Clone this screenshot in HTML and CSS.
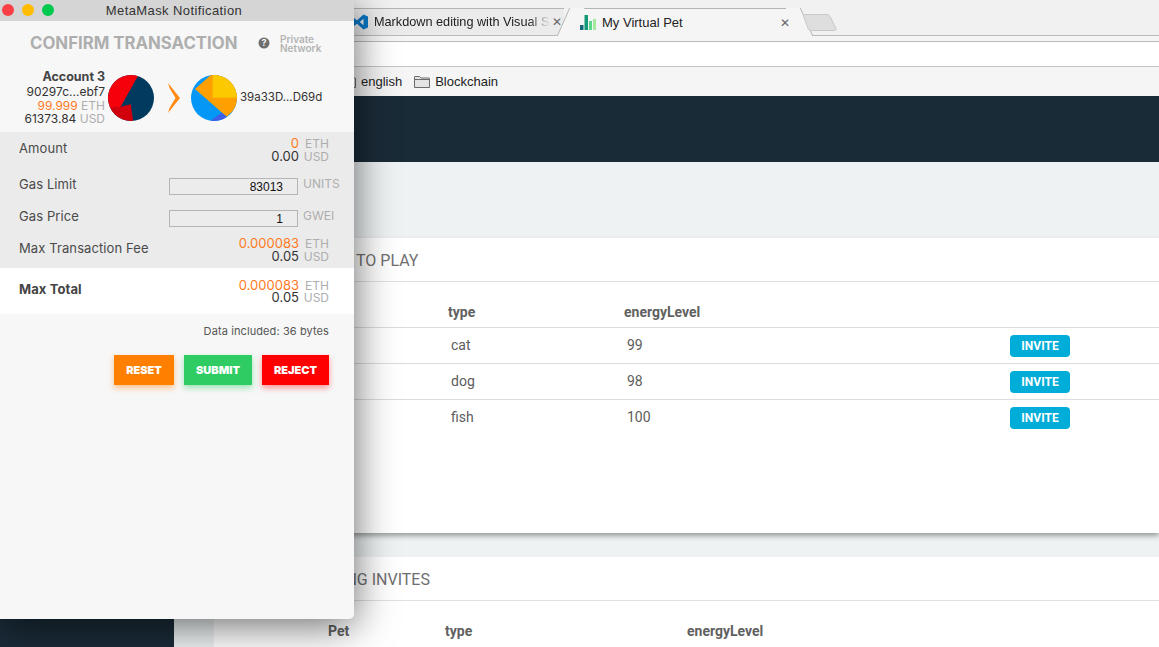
FILE: index.html
```html
<!DOCTYPE html>
<html lang="en">
    <head>
        <meta charset="UTF-8" />
        <title>My Virtual Pet</title>
        <link rel="stylesheet" href="styles.css">
    </head>
    <body>
        <div id="browser">
            <div class="tab-strip">
                <div class="tab tab-back">
                    <svg class="favicon" viewBox="0 0 16 16" width="16" height="16"><path fill="#0a78c8" d="M11.500 0.500 16 2.600v10.800l-4.500 2.100L5 9.800l-3 2.300-1.500-.8V4.700L2 3.900l3 2.300zM11.500 4.800 7.800 8l3.700 3.200z"/></svg>
                    <span class="tab-title tab-fade">Markdown editing with Visual S</span>
                    <span class="tab-close">&#10005;</span>
                </div>
                <div class="tab tab-active">
                    <svg class="favicon" viewBox="0 0 16 16" width="16" height="16">
                        <rect x="0" y="10" width="3.500" height="5" fill="#17687a"/>
                        <rect x="4.500" y="0" width="3.500" height="15" fill="#129a78"/>
                        <rect x="9" y="6" width="3" height="9" fill="#58d68a"/>
                        <rect x="13" y="4" width="3" height="11" fill="#a5e8a0"/>
                    </svg>
                    <span class="tab-title">My Virtual Pet</span>
                    <span class="tab-close">&#10005;</span>
                </div>
                <svg class="new-tab" viewBox="0 0 34 17" width="34" height="17"><path d="M1.500 .5H24q2 0 3 2l6 12q.6 2-1.500 2H8q-2 0-3-2L.6 2q-.4-1.500 .9-1.500z" fill="#dedede" stroke="#c8c8c8"/></svg>
            </div>
            <div class="toolbar-gap"></div>
            <div class="address-bar"></div>
            <div class="bookmarks">
                <div class="bookmark">
                    <svg class="folder" viewBox="0 0 16 12" width="16" height="12"><path d="M.5 11.500V1q0-.5 .5-.5h4.500l1.500 1.500h8q.5 0 .5 .5v9z" fill="#e4e4e4" stroke="#6b6b6b"/></svg>
                    <span>english</span>
                </div>
                <div class="bookmark">
                    <svg class="folder" viewBox="0 0 16 12" width="16" height="12"><path d="M.5 11.500V1q0-.5 .5-.5h4.500l1.500 1.500h8q.5 0 .5 .5v9z" fill="#e4e4e4" stroke="#6b6b6b"/><path d="M.5 3.500h15" stroke="#6b6b6b" fill="none"/></svg>
                    <span>Blockchain</span>
                </div>
            </div>
            <div class="app-header"></div>
            <div class="app-body">
                <div class="sidebar"></div>
                <div class="main">
                    <div class="page-title"></div>
                    <section class="card card-play">
                        <h2>TO PLAY</h2>
                        <div class="pet-table">
                            <div class="pet-row pet-head"><span></span><span>type</span><span>energyLevel</span><span></span></div>
                            <div class="pet-row"><span></span><span>cat</span><span>99</span><span><button class="invite">INVITE</button></span></div>
                            <div class="pet-row"><span></span><span>dog</span><span>98</span><span><button class="invite">INVITE</button></span></div>
                            <div class="pet-row"><span></span><span>fish</span><span>100</span><span><button class="invite">INVITE</button></span></div>
                        </div>
                    </section>
                    <section class="card card-invites">
                        <h2>PENDING INVITES</h2>
                        <div class="pet-table">
                            <div class="pet-row pet-head"><span>Pet</span><span>type</span><span>energyLevel</span></div>
                        </div>
                    </section>
                </div>
            </div>
        </div>

        <div id="popup">
            <div class="title-bar">
                <div class="lights">
                    <span class="light light-red"></span>
                    <span class="light light-yellow"></span>
                    <span class="light light-green"></span>
                </div>
                <div class="title-text">MetaMask Notification</div>
            </div>
            <div class="confirm-head">
                <h1>CONFIRM TRANSACTION</h1>
                <svg class="help" viewBox="0 0 12 12" width="12" height="12">
                    <circle cx="6" cy="6" r="5.500" fill="#6e6e6e"/>
                    <text x="6" y="9.200" text-anchor="middle" class="help-mark">?</text>
                </svg>
                <div class="network">Private<br />Network</div>
            </div>
            <div class="parties">
                <div class="sender">
                    <div class="sender-name">Account 3</div>
                    <div>90297c...ebf7</div>
                    <div><span class="orange">99.999</span> <span class="unit">ETH</span></div>
                    <div>61373.84 <span class="unit">USD</span></div>
                </div>
                <svg class="identicon" viewBox="0 0 46 46" width="46" height="46">
                    <defs><clipPath id="round-a"><circle cx="23" cy="23" r="23"/></clipPath></defs>
                    <g clip-path="url(#round-a)">
                        <rect width="46" height="46" fill="#003a5f"/>
                        <polygon points="-1,-1 31,-1 12.700,31.700 0,34" fill="#f6000c"/>
                        <polygon points="0,33 12.700,31.700 22.700,29.300 25.300,47 0,47" fill="#d1000c"/>
                    </g>
                </svg>
                <svg class="chevron" viewBox="0 0 12 30" width="12" height="30"><path d="M0 0 12 15 0 30 1.500 25 7.500 15 1.500 5z" fill="#ff8a12"/></svg>
                <svg class="identicon identicon-to" viewBox="0 0 46 46" width="46" height="46">
                    <defs><clipPath id="round-b"><circle cx="23" cy="23" r="23"/></clipPath></defs>
                    <g clip-path="url(#round-b)">
                        <rect width="46" height="46" fill="#0497f5"/>
                        <polygon points="4,14 22,-2 48,-2 48,30 35.700,41.700" fill="#ff9f00"/>
                        <rect x="21.700" y="-1" width="25" height="23.700" fill="#fcc800"/>
                        <polygon points="19,46 30.700,37.700 35.700,41.700 30,48" fill="#3d5fe8"/>
                    </g>
                </svg>
                <div class="receiver">39a33D...D69d</div>
            </div>
            <div class="fees">
                <div class="fee-row fee-amount">
                    <div class="fee-label">Amount</div>
                    <div class="values">
                        <div><span class="orange">0</span><span class="unit">ETH</span></div>
                        <div>0.00<span class="unit">USD</span></div>
                    </div>
                </div>
                <div class="fee-row fee-input">
                    <div class="fee-label">Gas Limit</div>
                    <div class="gas-box">83013</div>
                    <div class="unit gas-unit">UNITS</div>
                </div>
                <div class="fee-row fee-input">
                    <div class="fee-label">Gas Price</div>
                    <div class="gas-box">1</div>
                    <div class="unit gas-unit">GWEI</div>
                </div>
                <div class="fee-row fee-max">
                    <div class="fee-label">Max Transaction Fee</div>
                    <div class="values">
                        <div><span class="orange">0.000083</span><span class="unit">ETH</span></div>
                        <div>0.05<span class="unit">USD</span></div>
                    </div>
                </div>
            </div>
            <div class="total-row">
                <div class="fee-label total-label">Max Total</div>
                <div class="values">
                    <div><span class="orange">0.000083</span><span class="unit">ETH</span></div>
                    <div>0.05<span class="unit">USD</span></div>
                </div>
            </div>
            <div class="data-size">Data included: 36 bytes</div>
            <div class="actions">
                <button class="action action-reset">RESET</button>
                <button class="action action-submit">SUBMIT</button>
                <button class="action action-reject">REJECT</button>
            </div>
        </div>
    </body>
</html>
```

FILE: styles.css
```css
html, body {
    margin: 0;
    height: 647px;
    overflow: hidden;
}
body {
    position: relative;
    background-color: #fff;
    font-family: "Liberation Sans", Arial, sans-serif;
}
#browser {
    display: flex;
    flex-direction: column;
    height: 647px;
}

/* chrome */
.tab-strip {
    display: flex;
    align-items: flex-end;
    height: 36px;
    box-sizing: border-box;
    padding-left: 300px;
    background-color: #f1f1f1;
    border-bottom: 1px solid #b9b9b9;
    flex-shrink: 0;
}
.toolbar-gap {
    height: 5px;
    background-color: #f5f5f5;
    border-bottom: 1px solid #b9b9b9;
    flex-shrink: 0;
}
.tab {
    position: relative;
    display: flex;
    align-items: center;
    height: 27px;
    box-sizing: border-box;
    border-top: 1px solid #b4b4b4;
    font-size: 13px;
    color: #222;
}
.tab-back {
    width: 264px;
    padding-left: 52px;
    background-color: #ebebeb;
    font-size: 12.700px;
}
.tab-active {
    width: 230px;
    margin-left: 6px;
    margin-bottom: -1px;
    height: 28px;
    padding-left: 10px;
    background-color: #f5f5f5;
}
.tab-active::before,
.tab-active::after {
    content: "";
    position: absolute;
    top: -1px;
    bottom: 0;
    width: 14px;
    background-color: #f5f5f5;
}
.tab-active::before {
    left: -7px;
    transform: skewX(-24deg);
    border-left: 1px solid #b4b4b4;
}
.tab-active::after {
    right: -7px;
    transform: skewX(24deg);
    border-right: 1px solid #b4b4b4;
}
.favicon {
    flex-shrink: 0;
    margin-right: 6px;
}
.tab-title {
    flex: 1;
    white-space: nowrap;
    overflow: hidden;
    position: relative;
}
.tab-fade {
    -webkit-mask-image: linear-gradient(to right, #000 88%, transparent 100%);
}
.tab-close {
    font-size: 12px;
    color: #666;
    width: 14px;
    text-align: center;
    position: relative;
    z-index: 1;
}
.tab-active .tab-close {
    margin-right: 8px;
}
.new-tab {
    margin: 0 0 4px 3px;
    flex-shrink: 0;
    position: relative;
}
.address-bar {
    height: 24px;
    background-color: #fff;
    border-bottom: 1px solid #c4c4c4;
    flex-shrink: 0;
}
.bookmarks {
    display: flex;
    align-items: center;
    gap: 12px;
    height: 29px;
    padding-left: 340px;
    background-color: #f5f5f5;
    font-size: 13px;
    color: #222;
    flex-shrink: 0;
}
.bookmark {
    display: flex;
    align-items: center;
    gap: 5px;
}

/* page */
.app-header {
    height: 66px;
    background-color: #1a2b38;
    flex-shrink: 0;
}
.app-body {
    display: flex;
    flex: 1;
    min-height: 0;
}
.sidebar {
    width: 174px;
    background-color: #1a2b38;
    flex-shrink: 0;
}
.main {
    flex: 1;
    min-width: 0;
    padding-left: 40px;
    background-color: #eef2f3;
    font-family: Roboto, sans-serif;
    color: #5c5c5c;
}
.page-title {
    height: 76px;
}
.card {
    background-color: #fff;
}
.card-play {
    height: 295px;
    box-shadow: 0 3px 5px rgba(0, 0, 0, 0.35);
    margin-bottom: 24px;
}
.card h2 {
    margin: 0;
    height: 43px;
    line-height: 46px;
    font-size: 16px;
    font-weight: 400;
    color: #6f6f6f;
    border-bottom: 1px solid #e0e0e0;
}
.card-play h2 {
    padding-left: 142px;
}
.card-invites h2 {
    padding-left: 86px;
}
.pet-table {
    font-size: 14px;
}
.pet-row {
    display: grid;
    align-items: center;
    height: 35px;
    border-bottom: 1px solid #dcdcdc;
}
.card-play .pet-row {
    grid-template-columns: 234px 176px 386px 1fr;
}
.card-play .pet-row span:nth-child(2),
.card-play .pet-row span:nth-child(3) {
    padding-left: 3px;
    margin-bottom: 2px;
}
.card-play .pet-head {
    height: 45px;
    align-items: end;
    line-height: 30px;
}
.card-play .pet-head span:nth-child(2),
.card-play .pet-head span:nth-child(3) {
    padding-left: 0;
    margin-bottom: 0;
}
.card-play .pet-row:last-child {
    border-bottom: none;
}
.card-invites .pet-row {
    grid-template-columns: 117px 242px 1fr;
    height: 60px;
    padding-left: 114px;
    border: none;
}
.pet-head {
    font-weight: 700;
    color: #616161;
}
.invite {
    width: 60px;
    height: 22px;
    padding: 0;
    border: none;
    border-radius: 4px;
    background-color: #00add8;
    color: #fff;
    font-family: Roboto, sans-serif;
    font-size: 12px;
    font-weight: 700;
}

/* metamask popup */
#popup {
    position: absolute;
    left: 0;
    top: 0;
    width: 354px;
    height: 619px;
    background-color: #f7f7f7;
    border-radius: 5px 5px 5px 0;
    box-shadow: 0 6px 42px rgba(0, 0, 0, 0.6);
    overflow: hidden;
    font-family: Inter, sans-serif;
    color: #333;
}
.title-bar {
    position: relative;
    height: 21px;
    background-color: #d5d5d5;
}
.lights {
    position: absolute;
    left: 2px;
    top: 4px;
    display: flex;
    gap: 8px;
}
.light {
    width: 12px;
    height: 12px;
    border-radius: 50%;
}
.light-red { background-color: #fb3f45; }
.light-yellow { background-color: #ffbc00; }
.light-green { background-color: #00ca4e; }
.title-text {
    padding-right: 6px;
    text-align: center;
    line-height: 21px;
    font-family: "Liberation Sans", Arial, sans-serif;
    font-size: 13px;
    letter-spacing: 0.4px;
    color: #333;
}
.confirm-head {
    display: flex;
    align-items: center;
    height: 44px;
    padding-left: 30px;
}
.confirm-head h1 {
    margin: 0;
    width: 228px;
    font-size: 16.800px;
    font-weight: 700;
    white-space: nowrap;
    color: #aeaeae;
}
.help {
    flex-shrink: 0;
}
.help-mark {
    font-size: 9px;
    font-weight: 700;
    fill: #f7f7f7;
    font-family: Inter, sans-serif;
}
.network {
    margin: 2px 0 0 10px;
    font-size: 10px;
    line-height: 9px;
    font-weight: 600;
    color: #b4b4b4;
}
.parties {
    display: flex;
    align-items: center;
    height: 65px;
    padding-bottom: 2px;
}
.sender {
    width: 105px;
    text-align: right;
    font-size: 12px;
    line-height: 13.500px;
    flex-shrink: 0;
}
.sender-name {
    font-weight: 700;
    font-size: 12.500px;
    line-height: 16px;
    color: #444;
}
.identicon {
    flex-shrink: 0;
    margin-left: 3px;
}
.chevron {
    flex-shrink: 0;
    margin: 0 0 0 14px;
}
.identicon-to {
    margin-left: 11px;
}
.receiver {
    font-size: 11.500px;
    margin: 0 0 2px 3px;
    white-space: nowrap;
}
.orange {
    color: #ff7a22;
}
.unit {
    color: #aeaeae;
}
.fees {
    height: 136px;
    box-sizing: border-box;
    padding-top: 4px;
    background-color: #ebebeb;
}
.fee-row {
    display: flex;
    justify-content: space-between;
    align-items: center;
    height: 32px;
    padding: 0 25px 0 19px;
}
.fee-amount {
    margin: -4px 0 4px;
}
.fee-amount .values,
.fee-max .values {
    margin-top: 4px;
}
.fee-input {
    justify-content: flex-start;
    padding-right: 0;
}
.fee-label {
    font-size: 13px;
    letter-spacing: 0.1px;
    color: #4a4a4a;
    white-space: nowrap;
}
.values {
    text-align: right;
    font-size: 13px;
    line-height: 13px;
}
.values > div {
    height: 13px;
}
.values .unit {
    display: inline-block;
    width: 30px;
    text-align: right;
    font-size: 12px;
}
.gas-box {
    position: absolute;
    left: 169px;
    width: 129px;
    height: 17px;
    box-sizing: border-box;
    margin-top: 4px;
    padding-right: 14px;
    border: 1px solid #b5b5b5;
    background-color: #ececec;
    text-align: right;
    font-family: "Liberation Sans", Arial, sans-serif;
    font-size: 12px;
    line-height: 16px;
    color: #111;
}
.gas-unit {
    position: absolute;
    left: 303px;
    margin-top: -1px;
    font-size: 12px;
}
.total-row {
    display: flex;
    justify-content: space-between;
    align-items: center;
    height: 46px;
    padding: 0 25px 0 19px;
    background-color: #fff;
}
.total-row .values > div {
    height: 12px;
    line-height: 12px;
}
.total-label {
    margin-bottom: 4px;
    font-weight: 700;
    color: #444;
}
.data-size {
    padding: 10px 25px 0 0;
    text-align: right;
    font-size: 11px;
    letter-spacing: 0.1px;
    line-height: 14px;
    color: #555;
}
.actions {
    display: flex;
    justify-content: flex-end;
    gap: 10px;
    padding: 17px 25px 0 0;
}
.action {
    height: 30px;
    padding: 0;
    border: none;
    color: #fff;
    font-family: Inter, sans-serif;
    font-size: 11px;
    font-weight: 900;
}
.action-reset {
    width: 60px;
    background-color: #ff7f00;
    box-shadow: 0 3px 6px rgba(255, 127, 0, 0.45);
}
.action-submit {
    width: 68px;
    background-color: #2ecc62;
    box-shadow: 0 3px 6px rgba(46, 204, 98, 0.45);
}
.action-reject {
    width: 67px;
    background-color: #ff0000;
    box-shadow: 0 3px 6px rgba(255, 0, 0, 0.4);
}
```
